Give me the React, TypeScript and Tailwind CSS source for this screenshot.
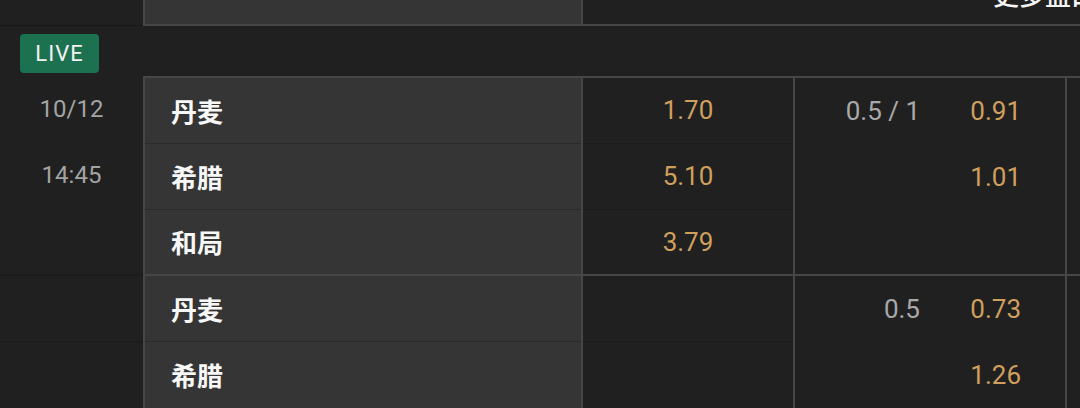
import React from "react";

const font = "font-['Roboto','Noto_Sans_CJK_SC',sans-serif]";

type HRow = { line?: string; odd?: string };

function rowH(i: number, n: number, full: boolean) {
  return full || i < n - 1 ? "h-[66px]" : "h-[64px]";
}

function TeamRows({ names, full }: { names: string[]; full: boolean }) {
  return (
    <div className="w-[440px] shrink-0 border-x-2 border-t-2 border-[#464646] bg-[#353535] flex flex-col">
      {names.map((n, i) => (
        <div
          key={i}
          className={
            rowH(i, names.length, full) +
            " shrink-0 flex items-center pl-[26px] pb-[1px] text-[26px] font-bold text-[#f7f7f7] font-['Noto_Sans_CJK_SC',sans-serif] " +
            (i < names.length - 1 ? "border-b border-[#2a2a2a]" : "")
          }
        >
          {n}
        </div>
      ))}
    </div>
  );
}

function OddRows({ odds, full }: { odds: string[]; full: boolean }) {
  return (
    <div className="w-[210px] shrink-0 border-t-2 border-[#464646] flex flex-col">
      {odds.map((o, i) => (
        <div
          key={i}
          className={
            rowH(i, odds.length, full) +
            " shrink-0 flex items-center justify-center text-[26px] text-[#cf9f5d] " +
            (i < odds.length - 1 ? "border-b border-[#1b1b1b]" : "")
          }
        >
          {o}
        </div>
      ))}
    </div>
  );
}

function HandicapRows({ rows, full }: { rows: HRow[]; full: boolean }) {
  return (
    <div className="w-[272px] shrink-0 border-l-2 border-t-2 border-[#464646] flex flex-col">
      {rows.map((r, i) => (
        <div
          key={i}
          className={rowH(i, rows.length, full) + " shrink-0 flex items-center justify-end pr-[44px] text-[26px]"}
        >
          <span className="text-[#a9a9a9] text-right">{r.line ?? ""}</span>
          <span className="w-[101px] text-right text-[#cf9f5d]">{r.odd ?? ""}</span>
        </div>
      ))}
    </div>
  );
}

function Block({
  left,
  names,
  odds,
  hcp,
  leftTop,
  full = false,
}: {
  left: string[];
  names: string[];
  odds: string[];
  hcp: HRow[];
  leftTop: string;
  full?: boolean;
}) {
  return (
    <div className="flex shrink-0">
      <div className={"w-[143px] shrink-0 border-t-2 flex flex-col " + leftTop}>
        {left.map((t, i) => (
          <div
            key={i}
            className={
              rowH(i, left.length, full) +
              " shrink-0 flex items-center justify-center pb-[5px] text-[24px] text-[#a3a3a3] " +
              (t === "" && i < left.length - 1 ? "border-b border-[#1b1b1b]" : "")
            }
          >
            {t}
          </div>
        ))}
      </div>
      <TeamRows names={names} full={full} />
      <OddRows odds={odds} full={full} />
      <HandicapRows rows={hcp} full={full} />
      <div className="flex-1 border-l-2 border-t-2 border-[#464646]" />
    </div>
  );
}

export default function App() {
  return (
    <div className={"w-[1080px] h-[408px] overflow-hidden bg-[#202020] flex flex-col " + font}>
      {/* partially visible header row */}
      <div className="flex h-[66px] -mt-[40px] shrink-0">
        <div className="w-[143px] shrink-0 border-b border-[#181818]" />
        <div className="w-[440px] shrink-0 bg-[#353535] border-x-2 border-b-2 border-[#464646]" />
        <div className="flex-1 border-b-2 border-[#464646] overflow-hidden flex items-center pl-[410px] pt-[2px]">
          <span className="whitespace-nowrap text-[26px] font-medium text-[#f5f5f5] font-['Noto_Sans_CJK_SC',sans-serif]">
            更多盘口
          </span>
        </div>
      </div>

      {/* LIVE row */}
      <div className="h-[50px] shrink-0 flex items-start pt-[8px] pl-[20px]">
        <div className="w-[79px] h-[39px] rounded-[4px] bg-[#1c7150] flex items-center justify-center text-[22px] tracking-[1px] text-[#f2f2f2]">
          LIVE
        </div>
      </div>

      <Block
        leftTop="border-transparent"
        left={["10/12", "14:45", ""]}
        names={["丹麦", "希腊", "和局"]}
        odds={["1.70", "5.10", "3.79"]}
        hcp={[{ line: "0.5 / 1", odd: "0.91" }, { odd: "1.01" }, {}]}
      />
      <Block
        full
        leftTop="border-[#1c1c1c]"
        left={["", ""]}
        names={["丹麦", "希腊"]}
        odds={["", ""]}
        hcp={[{ line: "0.5", odd: "0.73" }, { odd: "1.26" }]}
      />
    </div>
  );
}
